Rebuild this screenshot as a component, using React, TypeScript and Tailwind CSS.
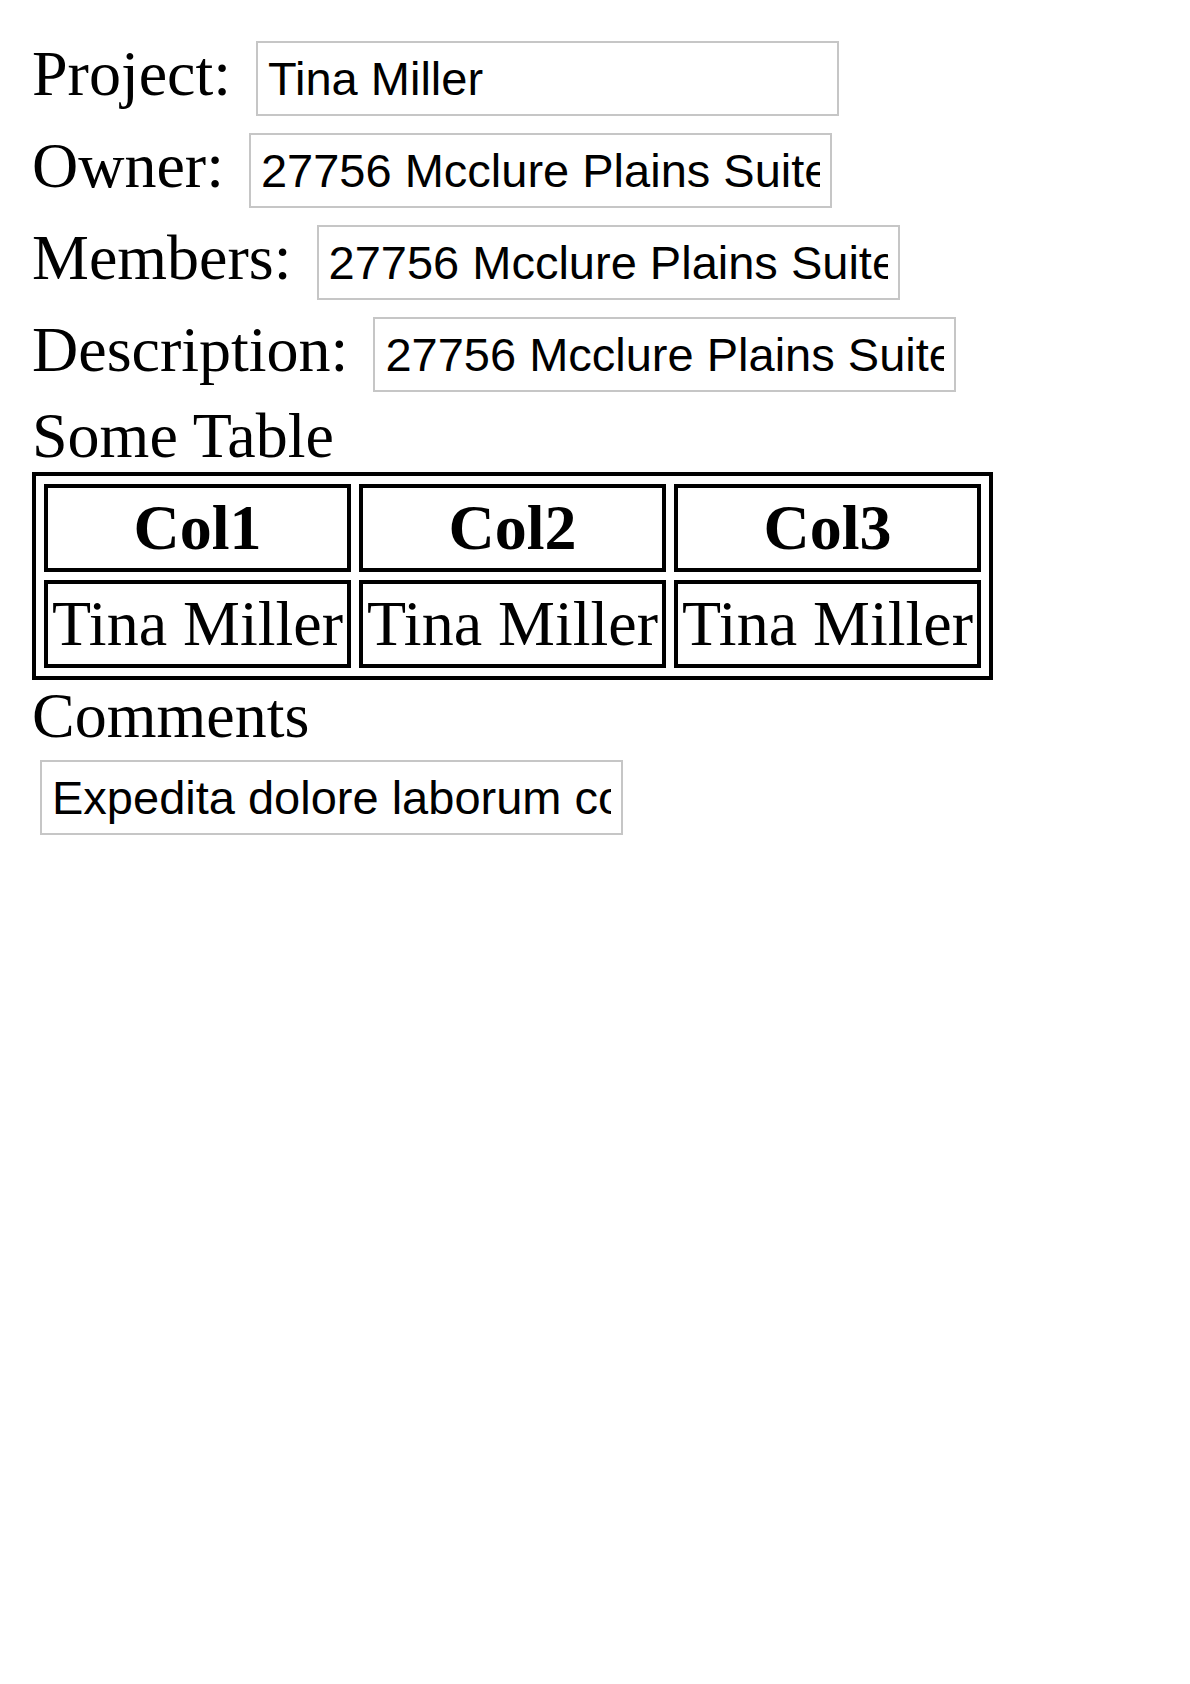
const fields = [
  { label: "Project:", value: "Tina Miller" },
  { label: "Owner:", value: "27756 Mcclure Plains Suite 840" },
  { label: "Members:", value: "27756 Mcclure Plains Suite 840" },
  { label: "Description:", value: "27756 Mcclure Plains Suite 840" },
];

export default function App() {
  return (
    <div className="min-h-screen bg-white pl-[32px] pt-[38px] font-['Liberation_Serif','Times_New_Roman',serif] text-[64px] leading-[72px] text-black">
      <div className="flex flex-col gap-[14px]">
        {fields.map((f) => (
          <div key={f.label} className="flex items-baseline gap-[25px]">
            <span>{f.label}</span>
            <input
              type="text"
              readOnly
              defaultValue={f.value}
              className="h-[75px] w-[583px] border-2 border-[#c6c6c6] bg-white px-[10px] font-['Liberation_Sans',Arial,sans-serif] text-[47px] text-black outline-none"
            />
          </div>
        ))}
      </div>

      <div className="mt-[8px]">Some Table</div>
      <table className="border-separate border-spacing-2 border-4 border-black">
        <thead>
          <tr>
            <th className="border-4 border-black p-1 text-center font-bold">Col1</th>
            <th className="border-4 border-black p-1 text-center font-bold">Col2</th>
            <th className="border-4 border-black p-1 text-center font-bold">Col3</th>
          </tr>
        </thead>
        <tbody>
          <tr>
            <td className="border-4 border-black p-1">Tina Miller</td>
            <td className="border-4 border-black p-1">Tina Miller</td>
            <td className="border-4 border-black p-1">Tina Miller</td>
          </tr>
        </tbody>
      </table>

      <div>Comments</div>
      <input
        type="text"
        readOnly
        defaultValue="Expedita dolore laborum consequatur quia"
        className="ml-[8px] mt-[8px] block h-[75px] w-[583px] border-2 border-[#c6c6c6] bg-white px-[10px] font-['Liberation_Sans',Arial,sans-serif] text-[47px] text-black outline-none"
      />
    </div>
  );
}
